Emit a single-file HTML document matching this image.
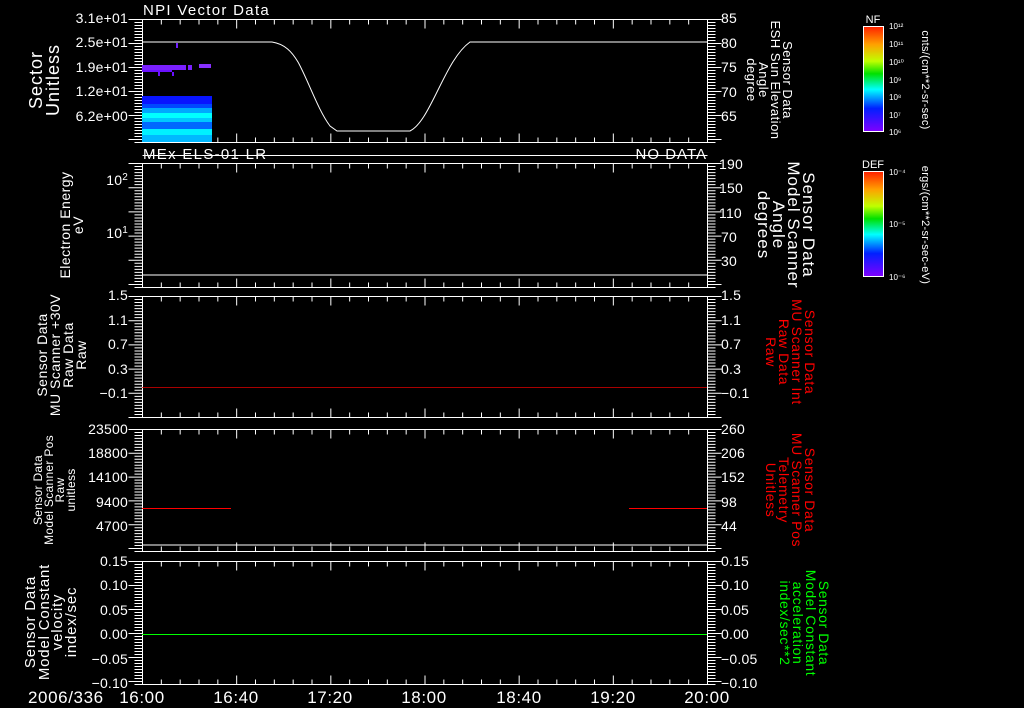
<!DOCTYPE html>
<html><head><meta charset="utf-8"><style>
html,body{margin:0;padding:0;background:#000;width:1024px;height:708px;overflow:hidden}
svg{display:block;font-family:"Liberation Sans",sans-serif}
.r{text-anchor:end}
.m{text-anchor:middle}
</style></head><body>
<svg id="s" width="1024" height="708" viewBox="0 0 1024 708" xmlns="http://www.w3.org/2000/svg" font-size="13" fill="#fff">
<g id="ticks" stroke="#fff" stroke-width="1" fill="none"></g>
<rect x="142" y="96" width="70" height="8" fill="#0814ff"/>
<rect x="142" y="104" width="70" height="4" fill="#0048ff"/>
<rect x="142" y="108" width="70" height="5" fill="#00a8ff"/>
<rect x="142" y="113" width="70" height="5" fill="#00ffff"/>
<rect x="142" y="118" width="70" height="4" fill="#00c8ff"/>
<rect x="142" y="122" width="70" height="7" fill="#0068ff"/>
<rect x="142" y="129" width="70" height="6" fill="#00f0ff"/>
<rect x="142" y="135" width="70" height="7" fill="#00b8ff"/>
<rect x="142" y="65" width="44" height="5" fill="#7a20ff"/>
<rect x="142" y="70" width="30" height="2" fill="#6a10ff"/>
<rect x="188" y="65" width="4" height="5" fill="#7a20ff"/>
<rect x="199" y="64" width="12" height="4" fill="#8830ff"/>
<rect x="176" y="43" width="2" height="5" fill="#7020ff"/>
<rect x="158" y="72" width="2" height="4" fill="#6a10ff"/>
<rect x="172" y="72" width="2" height="4" fill="#6a10ff"/>
<path d="M142 42 L272 42 C285 44 292 52 298 62 C308 80 318 110 330 126 L337 131 L410 131 C420 126 428 110 436 94 C446 74 456 52 470 42 L707 42" stroke="#fff" fill="none"/>
<line x1="142" y1="275" x2="707" y2="275" stroke="#fff"/>
<line x1="142" y1="387.5" x2="707" y2="387.5" stroke="#e00000" stroke-width="0.7"/>
<line x1="142" y1="508.5" x2="231" y2="508.5" stroke="#ff0000"/>
<line x1="629" y1="508.5" x2="707" y2="508.5" stroke="#ff0000"/>
<line x1="142" y1="545" x2="707" y2="545" stroke="#fff"/>
<line x1="142" y1="634.5" x2="707" y2="634.5" stroke="#00ff00"/>

<text x="143" y="15" font-size="15" letter-spacing="1.3">NPI Vector Data</text>
<text x="143" y="159" font-size="15" letter-spacing="1.3">MEx ELS-01 LR</text>
<text x="707" y="159" font-size="15" letter-spacing="1" class="r">NO DATA</text>

<g font-size="14" letter-spacing="0.2">
<text x="128" y="23" class="r">3.1e+01</text>
<text x="128" y="47" class="r">2.5e+01</text>
<text x="128" y="72" class="r">1.9e+01</text>
<text x="128" y="96" class="r">1.2e+01</text>
<text x="128" y="121" class="r">6.2e+00</text>
<text x="128" y="185" class="r">10<tspan dy="-5" font-size="10">2</tspan></text>
<text x="128" y="238" class="r">10<tspan dy="-5" font-size="10">1</tspan></text>
<text x="128" y="300" class="r">1.5</text>
<text x="128" y="325" class="r">1.1</text>
<text x="128" y="349" class="r">0.7</text>
<text x="128" y="374" class="r">0.3</text>
<text x="128" y="398" class="r">−0.1</text>
<text x="128" y="434" class="r">23500</text>
<text x="128" y="458" class="r">18800</text>
<text x="128" y="482" class="r">14100</text>
<text x="128" y="507" class="r">9400</text>
<text x="128" y="531" class="r">4700</text>
<text x="128" y="566" class="r">0.15</text>
<text x="128" y="590" class="r">0.10</text>
<text x="128" y="615" class="r">0.05</text>
<text x="128" y="639" class="r">0.00</text>
<text x="128" y="664" class="r">−0.05</text>
<text x="128" y="688" class="r">−0.10</text>
</g>

<g font-size="14" letter-spacing="0.2">
<text x="721" y="23">85</text>
<text x="721" y="48">80</text>
<text x="721" y="72">75</text>
<text x="721" y="97">70</text>
<text x="721" y="121">65</text>
<text x="719" y="169">190</text>
<text x="719" y="193">150</text>
<text x="719" y="218">110</text>
<text x="721" y="242">70</text>
<text x="721" y="266">30</text>
<text x="721" y="300">1.5</text>
<text x="721" y="325">1.1</text>
<text x="721" y="349">0.7</text>
<text x="721" y="374">0.3</text>
<text x="721" y="398">−0.1</text>
<text x="721" y="434">260</text>
<text x="721" y="458">206</text>
<text x="721" y="482">152</text>
<text x="721" y="507">98</text>
<text x="721" y="531">44</text>
<text x="721" y="566">0.15</text>
<text x="721" y="590">0.10</text>
<text x="721" y="615">0.05</text>
<text x="721" y="639">0.00</text>
<text x="721" y="664">−0.05</text>
<text x="721" y="688">−0.10</text>
</g>

<g font-size="17" letter-spacing="0.6">
<text x="28" y="703">2006/336</text>
<text x="142" y="703" class="m">16:00</text>
<text x="236" y="703" class="m">16:40</text>
<text x="330" y="703" class="m">17:20</text>
<text x="424" y="703" class="m">18:00</text>
<text x="519" y="703" class="m">18:40</text>
<text x="613" y="703" class="m">19:20</text>
<text x="707" y="703" class="m">20:00</text>
</g>

<g font-size="18" text-anchor="middle" letter-spacing="1">
<text transform="translate(42,80) rotate(-90)">Sector</text>
<text transform="translate(59,80) rotate(-90)">Unitless</text>
</g>
<g font-size="14" text-anchor="middle" letter-spacing="0.5">
<text transform="translate(70,225) rotate(-90)">Electron Energy</text>
<text transform="translate(83,225) rotate(-90)">eV</text>
<text transform="translate(47,355) rotate(-90)">Sensor Data</text>
<text transform="translate(60,355) rotate(-90)">MU Scanner +30V</text>
<text transform="translate(73,355) rotate(-90)">Raw Data</text>
<text transform="translate(86,355) rotate(-90)">Raw</text>
</g>
<g font-size="12" text-anchor="middle" letter-spacing="0.3">
<text transform="translate(42,490) rotate(-90)">Sensor Data</text>
<text transform="translate(53,490) rotate(-90)">Model Scanner Pos</text>
<text transform="translate(64,490) rotate(-90)">Raw</text>
<text transform="translate(75,490) rotate(-90)">unitless</text>
</g>
<g font-size="15" text-anchor="middle" letter-spacing="0.8">
<text transform="translate(35,622) rotate(-90)">Sensor Data</text>
<text transform="translate(49,622) rotate(-90)">Model Constant</text>
<text transform="translate(62,622) rotate(-90)">velocity</text>
<text transform="translate(76,622) rotate(-90)">index/sec</text>
</g>

<g font-size="13" text-anchor="middle" letter-spacing="0.5">
<text transform="translate(783,80) rotate(90)">Sensor Data</text>
<text transform="translate(771,80) rotate(90)">ESH Sun Elevation</text>
<text transform="translate(759,80) rotate(90)">Angle</text>
<text transform="translate(747,80) rotate(90)">degree</text>
</g>
<g font-size="17" text-anchor="middle" letter-spacing="1">
<text transform="translate(803,225) rotate(90)">Sensor Data</text>
<text transform="translate(788,225) rotate(90)">Model Scanner</text>
<text transform="translate(773,225) rotate(90)">Angle</text>
<text transform="translate(758,225) rotate(90)">degrees</text>
</g>
<g font-size="14" text-anchor="middle" letter-spacing="0.6">
<text fill="#ff0000" transform="translate(805,352) rotate(90)">Sensor Data</text>
<text fill="#ff0000" transform="translate(792,352) rotate(90)">MU Scanner Int</text>
<text fill="#ff0000" transform="translate(779,352) rotate(90)">Raw Data</text>
<text fill="#ff0000" transform="translate(766,352) rotate(90)">Raw</text>
<text fill="#ff0000" transform="translate(805,490) rotate(90)">Sensor Data</text>
<text fill="#ff0000" transform="translate(792,490) rotate(90)">MU Scanner Pos</text>
<text fill="#ff0000" transform="translate(779,490) rotate(90)">Telemetry</text>
<text fill="#ff0000" transform="translate(766,490) rotate(90)">Unitless</text>
<text fill="#00ff00" transform="translate(819,623) rotate(90)">Sensor Data</text>
<text fill="#00ff00" transform="translate(806,623) rotate(90)">Model Constant</text>
<text fill="#00ff00" transform="translate(793,623) rotate(90)">acceleration</text>
<text fill="#00ff00" transform="translate(780,623) rotate(90)">index/sec**2</text>
</g>

<defs>
<linearGradient id="cb" x1="0" y1="0" x2="0" y2="1">
<stop offset="0" stop-color="#ff2000"/><stop offset="0.17" stop-color="#ffa000"/>
<stop offset="0.33" stop-color="#c0ff00"/><stop offset="0.45" stop-color="#00e000"/>
<stop offset="0.6" stop-color="#00ffff"/><stop offset="0.78" stop-color="#0020ff"/>
<stop offset="1" stop-color="#8000ff"/>
</linearGradient>
</defs>
<rect x="863.5" y="26.5" width="20" height="105" fill="url(#cb)" stroke="#fff"/>
<rect x="863.5" y="171.5" width="20" height="105" fill="url(#cb)" stroke="#fff"/>
<text x="873" y="23" font-size="11" class="m">NF</text>
<text x="873" y="168" font-size="11" class="m">DEF</text>
<g font-size="8">
<text x="889" y="29">10¹²</text><text x="889" y="47">10¹¹</text><text x="889" y="65">10¹⁰</text>
<text x="889" y="83">10⁹</text><text x="889" y="100">10⁸</text><text x="889" y="118">10⁷</text><text x="889" y="135">10⁶</text>
<text x="889" y="175">10⁻⁴</text><text x="889" y="227">10⁻⁵</text><text x="889" y="280">10⁻⁶</text>
</g>
<g font-size="11" text-anchor="middle" letter-spacing="0.3">
<text transform="translate(922,80) rotate(90)">cnts/(cm**2-sr-sec)</text>
<text transform="translate(922,225) rotate(90)">ergs/(cm**2-sr-sec-eV)</text>
</g>
</svg>
<script>
(function(){
var g=document.getElementById('ticks');var d='';
var P=[[19.5,142.5],[163.5,287.5],[296.5,417.5],[429.5,551.5],[561.5,684.5]];
var L=142.5,R=707.5;
P.forEach(function(p){
 var t=p[0],b=p[1];
 d+='M'+L+' '+t+'H'+R+'V'+b+'H'+L+'Z';
 for(var i=0;i<=30;i++){var x=142.5+i*565/30;var len=(i%5==0)?9:5;
  d+='M'+x+' '+t+'v'+len+'M'+x+' '+b+'v-'+len;}
 var n=Math.round((b-t)/3);
 for(var j=0;j<=n;j++){var y=t+j*(b-t)/n;var ln=(j%8==0)?14:8;
  d+='M'+(L-ln)+' '+y+'h'+ln+'M'+R+' '+y+'h'+ln;}
});
d+='M142.5 155.5H707.5';
var pa=document.createElementNS('http://www.w3.org/2000/svg','path');
pa.setAttribute('d',d);g.appendChild(pa);
})();
</script>
</body></html>
